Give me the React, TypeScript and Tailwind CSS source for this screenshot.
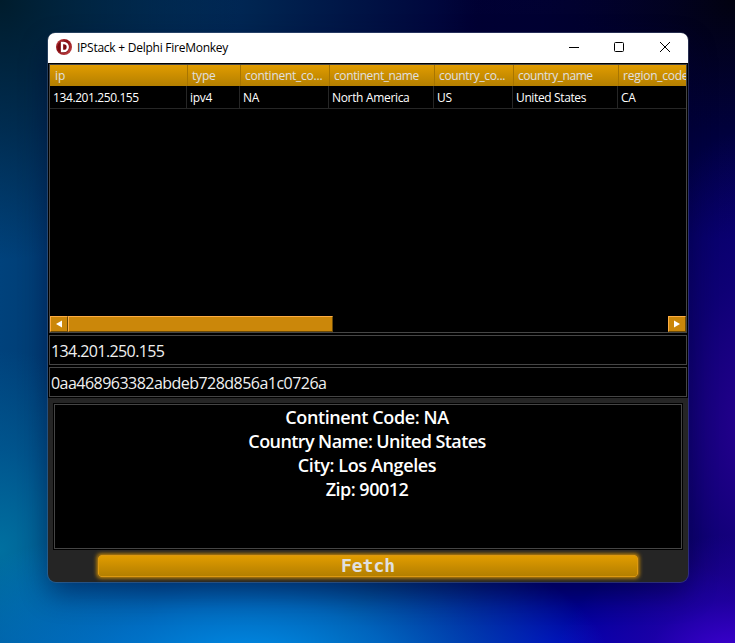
import React from "react";

const columns = [
  { name: "ip", value: "134.201.250.155", headWidth: "w-[138px]", width: "w-[137px]", head: "tracking-normal", cell: "tracking-[-0.4px]" },
  { name: "type", value: "ipv4", headWidth: "w-[53px]", width: "w-[53px]", head: "tracking-[-0.2px]", cell: "tracking-[-0.3px]" },
  { name: "continent_co...", value: "NA", headWidth: "w-[89px]", width: "w-[89px]", head: "tracking-[-0.25px]", cell: "tracking-[-0.3px]" },
  { name: "continent_name", value: "North America", headWidth: "w-[105px]", width: "w-[105px]", head: "tracking-[-0.4px]", cell: "tracking-[-0.33px]" },
  { name: "country_co...", value: "US", headWidth: "w-[79px]", width: "w-[79px]", head: "tracking-[-0.35px]", cell: "tracking-[-0.3px]" },
  { name: "country_name", value: "United States", headWidth: "w-[105px]", width: "w-[105px]", head: "tracking-[-0.45px]", cell: "tracking-[-0.37px]" },
  { name: "region_code", value: "CA", headWidth: "w-[105px]", width: "w-[105px]", head: "tracking-[-0.25px]", cell: "tracking-[-0.3px]" },
];

function TitleBar() {
  return (
    <div className="flex h-[30px] shrink-0 items-center rounded-t-[7px] bg-white pl-2 text-black">
      <svg width="16" height="16" viewBox="0 0 16 16" className="mt-[-2px]">
        <defs>
          <linearGradient id="logo" x1="0" y1="0" x2="1" y2="1">
            <stop offset="0" stopColor="#c8484c" />
            <stop offset="0.4" stopColor="#8d1015" />
            <stop offset="1" stopColor="#c84a4c" />
          </linearGradient>
        </defs>
        <circle cx="8" cy="8" r="8" fill="url(#logo)" />
        <circle cx="7.4" cy="8" r="6" fill="#7a0b10" />
        <path d="M6 4h1.8a4 4 0 0 1 0 8H6Z" fill="none" stroke="#fff" strokeWidth="2.3" />
      </svg>
      <span className="ml-[5px] text-[12px] leading-[30px] tracking-[-0.25px]">IPStack + Delphi FireMonkey</span>
      <div className="mr-[-1px] ml-auto flex">
        <svg width="46" height="30" viewBox="0 0 46 30" fill="none" stroke="#000"><path d="M18 14.5h10" /></svg>
        <svg width="46" height="30" viewBox="0 0 46 30" fill="none" stroke="#000"><rect x="17.5" y="9.5" width="9" height="9" rx="1" /></svg>
        <svg width="46" height="30" viewBox="0 0 46 30" fill="none" stroke="#000"><path d="M17 9l10 10M27 9L17 19" /></svg>
      </div>
    </div>
  );
}

function ScrollBar() {
  return (
    <div className="flex h-4 shrink-0">
      <div className="flex w-[18px] items-center justify-center border border-b-[#6b4a08] border-l-[#ffad42] border-r-[#6b4a08] border-t-[#ffad42] bg-[#cb870a]">
        <svg width="6" height="8" viewBox="0 0 6 8" className="-mt-px"><path d="M6 0.5v7L0 4z" fill="#fff" /></svg>
      </div>
      <div className="w-[265px] border border-b-[#6b4a08] border-l-[#ffad42] border-r-[#6b4a08] border-t-[#ffad42] bg-[#cb870a]" />
      <div className="ml-auto flex w-[18px] items-center justify-center border border-b-[#6b4a08] border-l-[#ffad42] border-r-[#6b4a08] border-t-[#ffad42] bg-[#cb870a]">
        <svg width="6" height="8" viewBox="0 0 6 8" className="-mt-px"><path d="M0 0.5v7L6 4z" fill="#fff" /></svg>
      </div>
    </div>
  );
}

function Grid() {
  return (
    <div className="flex h-[269px] flex-col border border-[#454545] bg-black">
      <div className="flex h-[21px] shrink-0 overflow-hidden bg-linear-to-b from-[#e19c00] to-[#b37f00] text-[#e0e0e0]">
        {columns.map((c) => (
          <div key={c.name} className={`${c.headWidth} shrink-0 border-r border-[#a87500] pl-1 text-[12px] leading-[22px] whitespace-nowrap first:pl-[5px]`}>
            <span className={c.head}>{c.name}</span>
          </div>
        ))}
      </div>
      <div className="flex h-[23px] shrink-0 overflow-hidden border-b border-[#262626] text-white">
        {columns.map((c) => (
          <div key={c.name} className={`${c.width} shrink-0 border-r border-[#262626] pl-[3px] text-[12px] leading-[23px] whitespace-nowrap`}>
            <span className={c.cell}>{c.value}</span>
          </div>
        ))}
      </div>
      <div className="flex-1" />
      <ScrollBar />
    </div>
  );
}

export default function App() {
  return (
    <div className="h-[643px] w-[735px] overflow-hidden bg-[#00245a] bg-[radial-gradient(ellipse_360px_150px_at_250px_665px,#0090ec_0%,#0080e0c0_40%,#0060d000_100%),radial-gradient(ellipse_160px_200px_at_0px_550px,#0070a0_0%,#0068a080_50%,#0060a000_100%),radial-gradient(ellipse_180px_130px_at_735px_665px,#4400dc_0%,#3400c080_50%,#2000a000_100%),radial-gradient(ellipse_220px_110px_at_560px_650px,#0000b8_0%,#0000a880_60%,#0000a000_100%),radial-gradient(ellipse_140px_300px_at_750px_430px,#260090_0%,#1c008880_50%,#10008000_100%),radial-gradient(ellipse_300px_240px_at_735px_0px,#020210_0%,#02021890_50%,#00002000_100%),radial-gradient(ellipse_240px_260px_at_0px_0px,#001c2c_0%,#001c3090_50%,#00204000_100%),linear-gradient(to_right,#00427c_0%,#002450_35%,#000038_65%,#000064_100%)] pt-[33px] pl-12 font-['Open_Sans','Noto_Sans',sans-serif]">
      <div className="flex h-[549px] w-[640px] flex-col rounded-lg bg-[#252525] shadow-[0_0_0_1px_#60709066,0_12px_28px_#00003070]">
        <TitleBar />
        <div className="flex h-[335px] shrink-0 flex-col gap-0.5 bg-black px-px pt-px">
          <Grid />
          <div className="h-[30px] border border-[#454545] pl-[1px] text-[16px] leading-[31px] tracking-[-0.6px] text-[#f0f0f0]">134.201.250.155</div>
          <div className="h-[30px] border border-[#454545] pl-[1px] text-[16px] leading-[31px] tracking-[-0.53px] text-[#f0f0f0]">0aa468963382abdeb728d856a1c0726a</div>
        </div>
        <div className="mx-[5px] mt-[5px] h-[147px] shrink-0 bg-black p-px">
          <div className="h-full border border-[#454545] pr-0.5 text-center text-[18px] leading-6 font-semibold text-white">
            <p className="tracking-[-0.4px]">Continent Code: NA</p>
            <p className="tracking-[-0.58px]">Country Name: United States</p>
            <p className="tracking-[-0.38px]">City: Los Angeles</p>
            <p className="tracking-[-0.5px]">Zip: 90012</p>
          </div>
        </div>
        <button className="mx-auto mt-[5px] h-[22px] w-[540px] shrink-0 rounded-[3px] border border-[#dc9811] bg-linear-to-b from-[#e19c00] to-[#b37f00] font-['DejaVu_Sans_Mono',monospace] text-[18px] leading-[20px] font-bold text-[#e0e0e0] shadow-[0_0_4px_1px_#e09a00]">
          Fetch
        </button>
      </div>
    </div>
  );
}
